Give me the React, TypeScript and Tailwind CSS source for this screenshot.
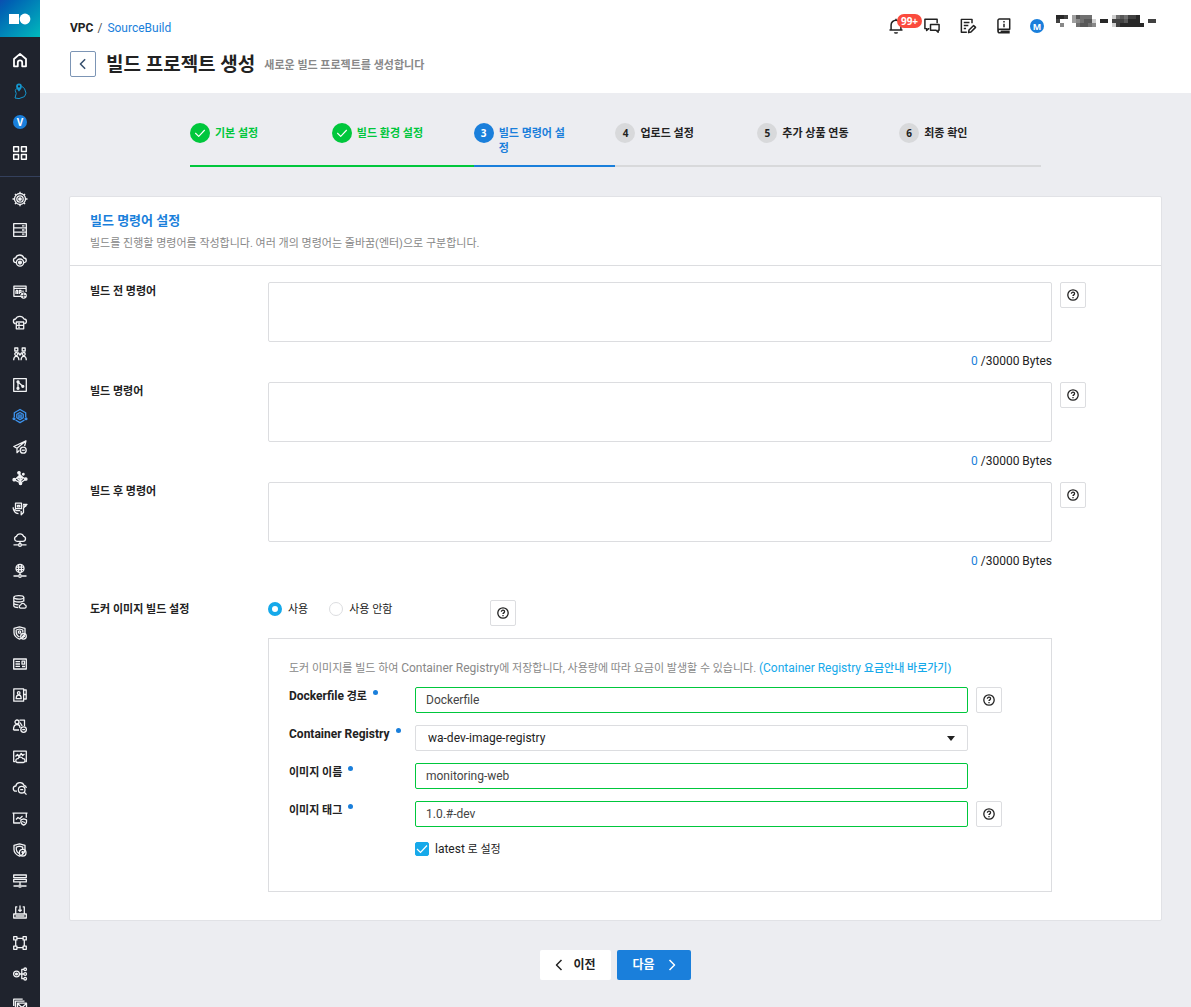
import { useState, type ReactNode } from "react";

function Icon({ children, className = "size-3.5" }: { children: ReactNode; className?: string }) {
  return (
    <svg
      viewBox="0 0 14 14"
      className={className}
      fill="none"
      stroke="currentColor"
      strokeWidth="1.3"
      strokeLinejoin="round"
      overflow="visible"
      aria-hidden="true"
    >
      {children}
    </svg>
  );
}

const cloud = "M3.6 8.6H3a2.4 2.4 0 0 1-.2-4.8A4.2 4.2 0 0 1 10.8 4a2.3 2.3 0 0 1 .3 4.6h-.8";
const shield = "M6.5.8 12 2.4v4c0 3-2.2 5.2-5.5 6.8C3.2 11.6 1 9.4 1 6.4v-4z";

const topItems: { name: string; color?: string; icon: ReactNode }[] = [
  {
    name: "Home",
    icon: (
      <Icon>
        <path strokeWidth="1.8" d="M1 6 7 .9 13 6v7.3H9.2V9.5a2.2 2.2 0 0 0-4.4 0v3.8H1z" />
      </Icon>
    ),
  },
  {
    name: "Region",
    color: "text-[#1597cf]",
    icon: (
      <Icon>
        <path strokeWidth="1" d="M3.5 4.5 2.3 6.500l.9 3-1.200 4.500 4 .6 5.500-2 1.500-3.500-1.500-4.500L9 2.500" />
        <path
          fill="currentColor"
          stroke="none"
          d="M6-.5a2.900 2.900 0 0 1 2.900 2.900C8.900 4.500 6 7.500 6 7.500S3.100 4.500 3.100 2.400A2.900 2.900 0 0 1 6-.5zm0 1.800a1.100 1.100 0 1 0 0 2.200 1.100 1.100 0 0 0 0-2.200z"
        />
      </Icon>
    ),
  },
  {
    name: "Platform",
    icon: (
      <span className="flex size-3.5 items-center justify-center rounded-full bg-[#1a7fdb] font-['Open_Sans'] text-[10px] leading-none font-bold text-white">
        V
      </span>
    ),
  },
  {
    name: "Services",
    icon: (
      <Icon>
        <g strokeWidth="1.5">
          <rect x=".7" y=".7" width="4.8" height="4.8" />
          <rect x="8.500" y=".7" width="4.800" height="4.800" />
          <rect x=".7" y="8.500" width="4.800" height="4.800" />
          <rect x="8.500" y="8.500" width="4.800" height="4.800" />
        </g>
      </Icon>
    ),
  },
];

const serviceItems: { name: string; active?: boolean; icon: ReactNode }[] = [
  {
    name: "Kubernetes",
    icon: (
      <>
        <circle cx="7" cy="7" r="5.5" />
        <circle cx="7" cy="7" r="3.200" />
        <circle cx="7" cy="7" r="1.200" fill="currentColor" />
        <path d="M7-.3v2M7 12.300v2M-.5 7h2.200M12.300 7h2.200M1.900 1.900l1.400 1.400M10.700 10.700l1.400 1.400M12.100 1.900l-1.400 1.400M3.300 10.700l-1.400 1.400" />
      </>
    ),
  },
  {
    name: "Server",
    icon: (
      <>
        <rect x=".7" y=".7" width="12.600" height="12.600" />
        <path d="M.7 4.900h12.600M.7 9.100h12.600M9 2.900h2.500M9 7h2.500M9 11.200h2.500" />
      </>
    ),
  },
  {
    name: "Cloud Insight",
    icon: (
      <>
        <path d={cloud} />
        <circle cx="7" cy="8.600" r="3.600" />
        <circle cx="7" cy="8.600" r="1.400" fill="currentColor" />
      </>
    ),
  },
  {
    name: "Domain",
    icon: (
      <>
        <path d="M8 11.300H.9V1.200h12.200V7M1 3.300h12M3 5.400v3.500M3 5.400h1.500v3.500M6.300 9V5.400H8v2H6.300M10 5.400V7" />
        <circle cx="10.700" cy="10.600" r="2.500" fill="currentColor" />
        <path stroke="#1f232d" strokeWidth=".7" d="M8.300 10.600h4.800M10.700 8.200V13" />
      </>
    ),
  },
  {
    name: "Object Storage",
    icon: (
      <>
        <path d="M2.800 7.600A2.300 2.300 0 0 1 2.600 3 4.600 4.600 0 0 1 11 3a2.300 2.300 0 0 1 .2 4.600" />
        <path d="M3.300 6h7.400v6.800H3.300zM3.300 9.400h7.400M5 7.800h2M5 11.100h2" />
      </>
    ),
  },
  {
    name: "Sub Account",
    icon: (
      <>
        <rect x="1.800" y="1" width="3" height="3" />
        <rect x="9.200" y="1" width="3" height="3" />
        <circle cx="3.300" cy="7" r="1.500" />
        <circle cx="10.700" cy="7" r="1.500" />
        <path d="M.7 13.300c0-2.500 1-4 2.600-4s2.600 1.500 2.600 4M8.100 13.300c0-2.500 1-4 2.600-4s2.600 1.500 2.600 4M5.200 5.500 7 8l1.800-2.500" />
      </>
    ),
  },
  {
    name: "SourceCommit",
    icon: (
      <>
        <rect x=".7" y=".7" width="12.600" height="12.600" />
        <circle cx="5" cy="3.800" r="1" fill="currentColor" />
        <circle cx="5" cy="10.300" r="1" fill="currentColor" />
        <circle cx="9.800" cy="8.300" r="1" fill="currentColor" />
        <path d="M5 3.800v6.500M5 4l4.800 4.300" />
      </>
    ),
  },
  {
    name: "SourceBuild",
    active: true,
    icon: (
      <>
        <path d="M1.300 8V3.800L7 .5l5.700 3.300V8M2.500 11 7 13.600l4.500-2.600" />
        <path d="M7 3.500 10.200 5.300v3.500L7 10.600 3.800 8.800V5.300z" />
        <path d="M5 6.200h4M5 8h4" />
        <circle cx="1" cy="9.700" r=".9" fill="currentColor" />
        <circle cx="13" cy="9.700" r=".9" fill="currentColor" />
      </>
    ),
  },
  {
    name: "SourceDeploy",
    icon: (
      <>
        <path d="M13 .8.800 6.500 4 8.200zM13 .8 4 8.200v4.500l2.300-2.300M13 .8 11.600 6" />
        <circle cx="10.200" cy="10.200" r="3" />
        <path d="M8.600 10.200h3.200" />
      </>
    ),
  },
  {
    name: "SourcePipeline",
    icon: (
      <>
        <path d="M1.200 8.700 7 5l5.800 3M6 2l1 3M7.500 12 7 5M1.200 8.700 7.500 12l5.300-4" />
        <path d="M7 3.800 10 7 7 10.200 4 7z" fill="currentColor" fillOpacity=".5" />
        <circle cx="6" cy="1.800" r="1.200" fill="currentColor" />
        <circle cx="1.200" cy="8.700" r="1.200" fill="currentColor" />
        <circle cx="12.800" cy="8" r="1.200" fill="currentColor" />
        <circle cx="7.500" cy="12.300" r="1.200" fill="currentColor" />
        <circle cx="10.300" cy="3.200" r=".8" fill="currentColor" />
      </>
    ),
  },
  {
    name: "Data Flow",
    icon: (
      <>
        <path d="M2.500 1.200h6v5.500h-6zM4.500 3.300h2.200v1.500H4.500zM.2 5.200c0 3.200 2 6 5.300 6.500M.2 8h2.500M10 2.300h4L10.500 6v4.500L8.200 12.800V9" />
        <path d="M2.500 8.700h4.700M9.800 4h3.500" />
      </>
    ),
  },
  {
    name: "Cloud Network",
    icon: (
      <>
        <path d="M4 8.300a2.500 2.500 0 0 1-.6-4.900 3.900 3.900 0 0 1 7.300 0A2.500 2.500 0 0 1 10 8.300zM7 8.300v2.200M.5 11.900h4.800M8.700 11.900h4.800" />
        <circle cx="7" cy="11.900" r="1.400" />
      </>
    ),
  },
  {
    name: "Global Network",
    icon: (
      <>
        <circle cx="7" cy="4.400" r="4" />
        <path d="M3 3.200h8M3 5.700h8M5.600.7v7.500M8.400.7v7.500M7 8.400v2.300M.5 12h4.800M8.700 12h4.800" />
        <circle cx="7" cy="12" r="1.300" />
      </>
    ),
  },
  {
    name: "Cloud DB",
    icon: (
      <>
        <ellipse cx="5.800" cy="2.400" rx="5" ry="1.800" />
        <path d="M.8 2.400v8.300c0 1 2 1.800 4.500 1.800M10.800 2.400v4M.8 5.200C.8 6.200 3 7 5.800 7s5-.8 5-1.800M.8 8c0 1 2.200 1.800 4.700 1.800" />
        <path d="M7.500 13.200a1.700 1.700 0 0 1 .2-3.300 2.200 2.200 0 0 1 4.200 0 1.700 1.700 0 0 1 0 3.300z" />
      </>
    ),
  },
  {
    name: "Security Monitoring",
    icon: (
      <>
        <path d={shield} />
        <path d="M6.500 3 9.800 4v2.500M6.500 11C4.500 9.800 3.200 8.500 3.200 6.500V4l3.300-1" />
        <circle cx="6.500" cy="6" r="1.200" />
        <circle cx="10.500" cy="10.300" r="2.800" />
        <path d="M10.500 8.800v3M9 10.300h3" />
      </>
    ),
  },
  {
    name: "Billing",
    icon: (
      <>
        <rect x=".7" y="2" width="12.600" height="10" />
        <path d="M2.500 4.700h4.500M2.500 7h4.500M2.500 9.300h4.500M9 4.200h2.500v3H9zM9 9.500h3" />
      </>
    ),
  },
  {
    name: "Certificate",
    icon: (
      <>
        <path d="M.8.8h9.800v12.400H.8zM10.600 2h2.600v9h-2.600M10.600 6.500h2.600" />
        <circle cx="5.700" cy="5" r="1.300" />
        <path d="M3.200 10.700c0-2.300 1-3.700 2.500-3.700s2.500 1.400 2.500 3.700z" />
      </>
    ),
  },
  {
    name: "Members",
    icon: (
      <>
        <circle cx="4" cy="3" r="2" />
        <path d="M.5 11c0-3.500 1.300-5.500 3.500-5.500S7 7 7 9M6.500 1.200h5v6M.5 11H6M7 3.500l2.200 3.300" />
        <circle cx="10.600" cy="10.600" r="2.800" />
        <path d="M9.200 10.600h2.800" />
      </>
    ),
  },
  {
    name: "Performance",
    icon: (
      <>
        <path d="M2.500 11.600H.7V1.200h12.600v10.400h-1M2.500 6.500l2-2 1.500 2 2.200-3 1.500 2L11.500 4" />
        <path d="M4.500 12.500a1.900 1.900 0 0 1 .5-3.800 2.600 2.600 0 0 1 4.800 0 1.900 1.900 0 0 1 .5 3.800z" />
      </>
    ),
  },
  {
    name: "Cloud Search",
    icon: (
      <>
        <path d="M4 10.200H3a2.600 2.600 0 0 1-.2-5.200 4.300 4.300 0 0 1 8.300-.5A2.700 2.700 0 0 1 13.300 7" />
        <circle cx="8.700" cy="8.700" r="3.300" />
        <path d="m11 11 2.500 2.600M7.200 8.700h3" />
      </>
    ),
  },
  {
    name: "Web Security",
    icon: (
      <>
        <path d="M7 11H.7V1.200h12.600v4.500M-.5 1.200h15M3 7.500l2-2 1.700 1.200L9.500 4" />
        <path d="m10.700 6.800 2.800 1v2c0 1.500-1.200 2.700-2.800 3.400-1.600-.7-2.800-1.900-2.800-3.400v-2zM9 9.500l3 1" />
      </>
    ),
  },
  {
    name: "Secure Zone",
    icon: (
      <>
        <path d={shield} />
        <path d="M6.500 3.200 9.700 4.200v2.300M6 10.500C4.300 9.300 3.300 8.200 3.300 6.500V4.200l3.200-1" />
        <circle cx="9.700" cy="9.700" r="3.300" />
        <path d="M9.700 8v3.400M8.300 9.200h2.800" />
      </>
    ),
  },
  {
    name: "Load Balancer",
    icon: (
      <>
        <path d="M.7 1h12.600v2.600H.7zM.7 5.300h12.600v2.600H.7zM7 8v2.500M.5 12h4.800M8.700 12h4.800" />
        <circle cx="7" cy="12" r="1.200" />
      </>
    ),
  },
  {
    name: "Import",
    icon: (
      <>
        <path d="M4.300 1.800H2.700v7M9.700 1.800h1.600v7M7 .5v5.800M5.300 4.700 7 6.400l1.700-1.700M.7 9h12.600v4H.7zM2.500 11h9" />
      </>
    ),
  },
  {
    name: "VPC",
    icon: (
      <>
        <rect x=".7" y=".7" width="3.200" height="3.200" />
        <rect x="10.100" y=".7" width="3.200" height="3.200" />
        <rect x=".7" y="10.100" width="3.200" height="3.200" />
        <rect x="10.100" y="10.100" width="3.200" height="3.200" />
        <path d="M3.900 2.300h6.200M3.900 11.700h6.200M2.700 3.900v6.200M11.300 3.900v6.200" />
      </>
    ),
  },
  {
    name: "API Gateway",
    icon: (
      <>
        <circle cx="3.500" cy="7" r="2.900" />
        <circle cx="3.500" cy="7" r=".9" fill="currentColor" />
        <path d="M6.500 7h4.500M11 2.300H8.800v9.400H11" />
        <circle cx="12.200" cy="2.300" r="1.300" />
        <circle cx="12.200" cy="7" r="1.300" />
        <circle cx="12.200" cy="11.700" r="1.300" />
      </>
    ),
  },
  {
    name: "Mailer",
    icon: <path d="M.7 8V1.200h9M2.500 10V3.200h9M4.500 5.200h9v7.500h-9zM4.500 5.500 9 9.500l4.500-4" />,
  },
];

function Sidebar() {
  return (
    <aside className="sticky top-0 flex h-screen w-10 shrink-0 flex-col overflow-hidden bg-[#1f232d]">
      <a
        href="#"
        aria-label="Console"
        className="flex h-[37px] shrink-0 items-center justify-center bg-linear-to-br from-[#0b4fb0] to-[#03b9bb]"
      >
        <svg viewBox="0 0 22 12" className="h-3 w-[22px]" fill="#fff" aria-hidden="true">
          <rect x="0" y="1" width="10" height="10" />
          <circle cx="16" cy="6" r="5.400" />
        </svg>
      </a>
      <nav aria-label="Main" className="flex flex-col border-b border-[#34405c] pt-[7px] pb-2">
        {topItems.map((item) => (
          <a
            key={item.name}
            href="#"
            aria-label={item.name}
            className={`flex h-[31px] items-center justify-center ${item.color ?? "text-white"}`}
          >
            {item.icon}
          </a>
        ))}
      </nav>
      <nav aria-label="Services" className="flex flex-col pt-1.5">
        {serviceItems.map((item) => (
          <a
            key={item.name}
            href="#"
            aria-label={item.name}
            className={`flex h-[31px] items-center justify-center ${item.active ? "text-[#3d94f0]" : "text-[#f2f3f5]"}`}
          >
            <Icon>{item.icon}</Icon>
          </a>
        ))}
      </nav>
    </aside>
  );
}

// Darkness of each cell of the masked account name, row by row.
const maskRows = ["99804766600000267688900000", "80004567720990888799900880", "05000677650000289999990000"];

function MaskedName() {
  return (
    <svg viewBox="0 0 104 12" className="mt-[3px] h-3 w-[104px] self-start" role="img" aria-label="Account">
      {maskRows.flatMap((row, y) =>
        row
          .split("")
          .map((v, x) =>
            v === "0" ? null : (
              <rect key={`${x}-${y}`} x={x * 4} y={y * 4} width="4" height="4" fill="#111" opacity={Number(v) / 10} />
            ),
          ),
      )}
    </svg>
  );
}

function Header() {
  return (
    <header className="flex h-[93px] items-start justify-between bg-white pr-[31px] pl-[30px]">
      <div>
        <nav aria-label="Breadcrumb" className="mt-5 flex h-4 items-center text-xs leading-4">
          <strong className="font-bold">VPC</strong>
          <span className="mx-1 text-[#555]">/</span>
          <a href="#" className="ml-px text-[#1a7fdb]">
            SourceBuild
          </a>
        </nav>
        <div className="mt-[15px] flex h-[26px] items-center">
          <button
            type="button"
            aria-label="뒤로"
            className="flex size-[26px] items-center justify-center rounded-xs border border-[#7c95b5] text-[#36506f]"
          >
            <Icon className="size-3">
              <path strokeWidth="1.8" d="M9.500 1.500 4 7l5.500 5.500" />
            </Icon>
          </button>
          <h1 className="ml-2.5 pt-0.5 text-[19px] leading-6 font-bold text-[#222]">빌드 프로젝트 생성</h1>
          <p className="ml-[9px] pt-1 text-[11px] leading-4 font-bold text-[#888]">새로운 빌드 프로젝트를 생성합니다</p>
        </div>
      </div>
      <div className="mt-3 flex items-center">
        <button type="button" aria-label="알림 99+" className="relative mr-5 h-7 w-4 text-[#222]">
          <Icon className="size-4">
            <path d="M1.300 10.600h11.400M2.700 10.400V6.200a4.300 4.300 0 0 1 8.600 0v4.200M5.600 12.500c.4.700 2.400.7 2.800 0M7 .6v1.300" />
          </Icon>
          <span className="absolute top-0.5 left-[9px] flex h-3.5 w-[25px] items-center justify-center rounded-full bg-[#fb4b3d] font-['Open_Sans'] text-[10px] leading-none font-bold text-white">
            99+
          </span>
        </button>
        <button type="button" aria-label="문의" className="mr-5 text-[#222]">
          <Icon className="size-4">
            <path d="M4.700 9.300H4L2.300 11V9.300H.8V1h10.700v3.500" />
            <path d="M5.700 5.700h7.500v5h-.8v1.800l-1.800-1.800H5.700z" />
          </Icon>
        </button>
        <button type="button" aria-label="메모" className="mr-5 text-[#222]">
          <Icon className="size-4">
            <path d="M6 12.500H1.200V1.200h9.300v3.300M3.300 4h5M3.300 6.600h4M3.300 9.200h2" />
            <path d="m7.500 12.800.4-2.300 4-4 1.700 1.700-4 4z" />
          </Icon>
        </button>
        <button type="button" aria-label="가이드" className="mr-[18px] text-[#222]">
          <Icon className="size-4">
            <path d="M12 13H3.300a1.600 1.600 0 0 1-1.600-1.600V2.200c0-.8.500-1.300 1.300-1.300h9v9H3.300a1.500 1.500 0 0 0 0 3M4 11.500h8" />
            <path d="M7 5v3M7 2.700v1.200" />
          </Icon>
        </button>
        <span className="mr-3 flex size-3.5 items-center justify-center rounded-full bg-[#1a7fdb] font-['Open_Sans'] text-[9px] leading-none font-bold text-white">
          M
        </span>
        <MaskedName />
      </div>
    </header>
  );
}

type StepState = "done" | "current" | "todo";

const steps: { label: string; state: StepState }[] = [
  { label: "기본 설정", state: "done" },
  { label: "빌드 환경 설정", state: "done" },
  { label: "빌드 명령어 설정", state: "current" },
  { label: "업로드 설정", state: "todo" },
  { label: "추가 상품 연동", state: "todo" },
  { label: "최종 확인", state: "todo" },
];

const stepStyles: Record<StepState, { item: string; dot: string }> = {
  done: { item: "border-[#00c73c] text-[#00c73c]", dot: "bg-[#00c73c] text-white" },
  current: { item: "border-[#1a7fdb] text-[#1a7fdb]", dot: "bg-[#1a7fdb] text-white" },
  todo: { item: "border-[#d8d9db] text-[#222]", dot: "bg-[#d8d9db] text-[#222]" },
};

function Steps() {
  return (
    <ol className="mx-[150px] mt-[30px] grid grid-cols-6">
      {steps.map((step, i) => (
        <li
          key={step.label}
          className={`flex h-11 items-start gap-[5px] border-b-2 pr-[45px] ${stepStyles[step.state].item}`}
        >
          <span
            className={`flex size-5 shrink-0 items-center justify-center rounded-full font-['Open_Sans'] text-[10px] leading-none font-bold ${stepStyles[step.state].dot}`}
          >
            {step.state === "done" ? (
              <Icon className="size-3">
                <path strokeWidth="1.3" d="m1.500 7 4 4 7-7.500" />
              </Icon>
            ) : (
              i + 1
            )}
          </span>
          <span className="mt-[3px] text-[11px] leading-[15px] font-bold">{step.label}</span>
        </li>
      ))}
    </ol>
  );
}

function HelpButton() {
  return (
    <button
      type="button"
      aria-label="도움말"
      className="flex size-[26px] shrink-0 items-center justify-center rounded-xs border border-[#dcdde0] bg-white text-[#222]"
    >
      <svg viewBox="0 0 24 24" className="size-3" fill="none" stroke="currentColor" strokeWidth="2.600" aria-hidden="true">
        <circle cx="12" cy="12" r="10.400" />
        <path d="M8.800 9.500a3.200 3.200 0 0 1 6.400 0c0 2.200-3.200 2.300-3.200 4.700M12 16.200v2.400" />
      </svg>
    </button>
  );
}

function CommandRow({ id, label }: { id: string; label: string }) {
  const [value, setValue] = useState("");
  return (
    <div className="flex h-[100px] items-start">
      <label htmlFor={id} className="w-[178px] shrink-0 text-[11px] leading-5 font-bold">
        {label}
      </label>
      <div className="flex-1">
        <textarea
          id={id}
          value={value}
          onChange={(e) => setValue(e.target.value)}
          className="block h-[60px] w-full resize-none rounded-xs border border-[#dcdde0] bg-white px-2.5 py-1 text-xs outline-none"
        />
        <p className="mt-2.5 text-right text-xs leading-[18px]">
          <span className="text-[#1a7fdb]">{new TextEncoder().encode(value).length}</span> /30000 Bytes
        </p>
      </div>
      <div className="ml-2">
        <HelpButton />
      </div>
    </div>
  );
}

function FieldRow({
  id,
  label,
  help = false,
  children,
}: {
  id: string;
  label: ReactNode;
  help?: boolean;
  children: ReactNode;
}) {
  return (
    <div className="flex items-start">
      <label htmlFor={id} className="flex w-[126px] shrink-0 text-[11px] leading-5 font-bold">
        {label}
        <span className="mt-[3px] ml-1.5 size-[5px] rounded-full bg-[#1a7fdb]" />
      </label>
      <div className="relative flex-1">{children}</div>
      <div className="ml-2 w-[26px]">{help && <HelpButton />}</div>
    </div>
  );
}

function ValidInput({ id, value }: { id: string; value: string }) {
  return (
    <input
      id={id}
      type="text"
      defaultValue={value}
      className="block h-[26px] w-full rounded-xs border border-[#00c73c] bg-white px-2.5 text-xs text-[#444] outline-none"
    />
  );
}

function Radio({ label, checked = false }: { label: string; checked?: boolean }) {
  return (
    <label className="flex items-start gap-1.5 text-[11px] leading-5 text-[#222]">
      <input
        type="radio"
        name="docker"
        defaultChecked={checked}
        className="mt-0.5 size-3.5 appearance-none rounded-full border border-[#dcdde0] bg-white checked:border-4 checked:border-[#16a9ea]"
      />
      {label}
    </label>
  );
}

function DockerSettings() {
  return (
    <div className="border border-[#dcdde0] pt-5 pr-[49px] pb-8 pl-5">
      <p className="text-[11px] leading-[18px] text-[#888]">
        도커 이미지를 빌드 하여 <span className="text-xs leading-[18px]">Container Registry</span>에 저장합니다, 사용량에
        따라 요금이 발생할 수 있습니다.{" "}
        <a href="#" className="font-medium text-[#16a9ea]">
          <span className="text-xs leading-[18px] font-normal">(Container Registry</span> 요금안내 바로가기)
        </a>
      </p>
      <div className="mt-[9px] flex flex-col gap-3">
        <FieldRow
          id="dockerfile"
          help
          label={
            <span className="leading-[18px]">
              <span className="text-xs leading-[18px]">Dockerfile</span> 경로
            </span>
          }
        >
          <ValidInput id="dockerfile" value="Dockerfile" />
        </FieldRow>
        <FieldRow id="registry" label={<span className="text-xs leading-[18px]">Container Registry</span>}>
          <select
            id="registry"
            className="block h-[26px] w-full appearance-none rounded-xs border border-[#dcdde0] bg-white px-3 text-xs text-[#222] outline-none"
          >
            <option>wa-dev-image-registry</option>
          </select>
          <svg
            viewBox="0 0 8 5"
            className="pointer-events-none absolute top-[11px] right-[13px] h-[5px] w-2"
            fill="#222"
            aria-hidden="true"
          >
            <path d="M0 0h8L4 5z" />
          </svg>
        </FieldRow>
        <FieldRow id="image-name" label="이미지 이름">
          <ValidInput id="image-name" value="monitoring-web" />
        </FieldRow>
        <FieldRow id="image-tag" label="이미지 태그" help>
          <ValidInput id="image-tag" value="1.0.#-dev" />
        </FieldRow>
      </div>
      <label className="relative mt-[13px] ml-[126px] flex w-fit items-start gap-1.5 text-[11px] leading-[18px] text-[#222]">
        <input
          type="checkbox"
          defaultChecked
          className="peer mt-0.5 size-3.5 appearance-none rounded-xs border border-[#dcdde0] bg-white checked:border-[#16a9ea] checked:bg-[#16a9ea]"
        />
        <svg
          viewBox="0 0 14 14"
          className="pointer-events-none absolute top-0.5 left-0 hidden size-3.5 peer-checked:block"
          fill="none"
          stroke="#fff"
          strokeWidth="1.2"
          aria-hidden="true"
        >
          <path d="m2 7 3.500 3.500L12 3.500" />
        </svg>
        <span>
          <span className="text-xs leading-[18px]">latest</span> 로 설정
        </span>
      </label>
    </div>
  );
}

export default function App() {
  return (
    <div className="flex min-h-screen bg-[#ecedf1] font-[Roboto,'Noto_Sans_CJK_KR',sans-serif] text-[#222]">
      <Sidebar />
      <div className="min-w-0 flex-1">
        <Header />
        <main className="pb-7">
          <Steps />
          <form onSubmit={(e) => e.preventDefault()}>
            <section className="mx-[29px] mt-[29px] rounded-xs border border-[#e1e2e6] bg-white">
              <div className="border-b border-[#dcdde0] px-5 pt-[13px] pb-3">
                <h2 className="text-[13px] leading-[22px] font-bold text-[#1a7fdb]">빌드 명령어 설정</h2>
                <p className="mt-[3px] text-[11px] leading-[18px] text-[#888]">
                  빌드를 진행할 명령어를 작성합니다. 여러 개의 명령어는 줄바꿈(엔터)으로 구분합니다.
                </p>
              </div>
              <div className="pt-4 pr-[75px] pb-7 pl-5">
                <CommandRow id="pre-build" label="빌드 전 명령어" />
                <CommandRow id="build" label="빌드 명령어" />
                <CommandRow id="post-build" label="빌드 후 명령어" />
                <div className="mt-[18px] flex">
                  <h3 className="w-[178px] shrink-0 text-[11px] leading-5 font-bold">도커 이미지 빌드 설정</h3>
                  <div className="mr-[34px] flex-1">
                    <div className="mb-3 flex items-start">
                      <div className="flex w-[222px] gap-[21px]">
                        <Radio label="사용" checked />
                        <Radio label="사용 안함" />
                      </div>
                      <HelpButton />
                    </div>
                    <DockerSettings />
                  </div>
                </div>
              </div>
            </section>
            <div className="mt-[29px] flex justify-center gap-1.5">
              <button
                type="button"
                className="flex h-[30px] items-center gap-[7px] rounded-xs bg-white pr-[15px] pl-3 text-xs font-bold text-[#222]"
              >
                <Icon>
                  <path strokeWidth="1.5" d="M9.500 2 4.500 7l5 5" />
                </Icon>
                이전
              </button>
              <button
                type="submit"
                className="flex h-[30px] items-center gap-2.5 rounded-xs bg-[#1a7fdb] pr-3 pl-4 text-xs font-bold text-white"
              >
                다음
                <Icon>
                  <path strokeWidth="1.5" d="m4.500 2 5 5-5 5" />
                </Icon>
              </button>
            </div>
          </form>
        </main>
      </div>
    </div>
  );
}
